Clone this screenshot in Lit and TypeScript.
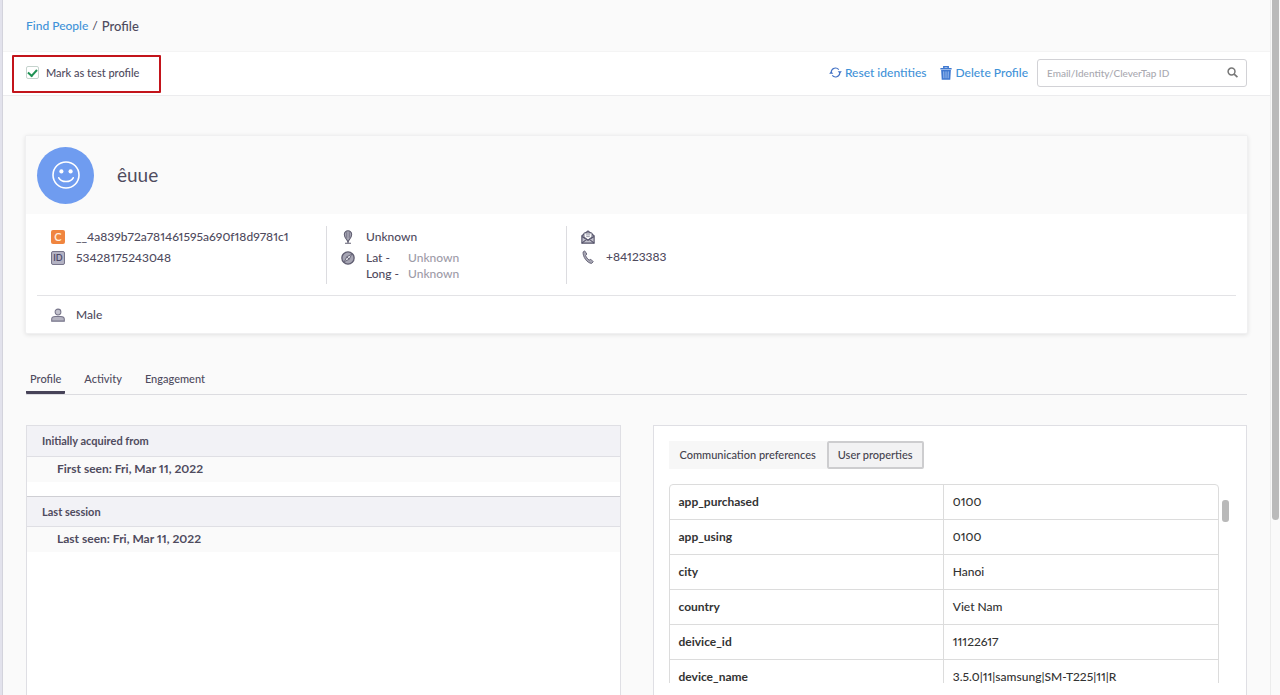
import { LitElement, html, css, svg } from "lit";
import { customElement, state } from "lit/decorators.js";

interface Property {
  name: string;
  value: string;
}

const PROPERTIES: Property[] = [
  { name: "app_purchased", value: "0100" },
  { name: "app_using", value: "0100" },
  { name: "city", value: "Hanoi" },
  { name: "country", value: "Viet Nam" },
  { name: "deivice_id", value: "11122617" },
  { name: "device_name", value: "3.5.0|11|samsung|SM-T225|11|R" },
];

const TABS = ["Profile", "Activity", "Engagement"];

const icon = (size: number, body: unknown, viewBox = "0 0 16 16") => html`<svg
  class="icon"
  width=${size}
  height=${size}
  viewBox=${viewBox}
  fill="none"
  aria-hidden="true"
>${body}</svg>`;

const resetIcon = icon(13, svg`
  <g stroke="#3f6fc4" stroke-width="1.4">
    <path d="M2.7 7.2A5.3 5.3 0 0 1 12 4.4"/>
    <path d="M13.3 8.8A5.3 5.3 0 0 1 4 11.6"/>
  </g>
  <path d="M10.8 6.4h5L13.3 9.6z" fill="#3f6fc4"/>
  <path d="M.2 9.6h5L2.7 6.4z" fill="#3f6fc4"/>`);

const trashIcon = icon(14, svg`
  <path d="M5.5 2.4V.8h5v1.6M1.6 3.2h12.8" stroke="#3f78d0" stroke-width="1.7"/>
  <path d="M2.4 4.6h11.2l-.7 11.2H3.1z" fill="#3f78d0"/>
  <path d="M5.4 6.2l.2 7.8M8 6.2V14M10.6 6.2l-.2 7.8" stroke="#a9c8f3" stroke-width="1"/>`);

const searchIcon = icon(11, svg`
  <circle cx="6.6" cy="6.6" r="5" stroke="#777" stroke-width="2.2"/>
  <path d="M10.4 10.4l4.8 4.4" stroke="#777" stroke-width="2.4"/>`);

const smileIcon = icon(28, svg`
  <circle cx="14" cy="14" r="13" stroke="#fff" stroke-width="1.6"/>
  <circle cx="9.4" cy="10.4" r="2.1" fill="#fff"/>
  <circle cx="18.6" cy="10.4" r="2.1" fill="#fff"/>
  <path d="M6.8 16.8a7.8 6 0 0 0 14.4 0" stroke="#fff" stroke-width="1.7" stroke-linecap="round"/>`,
  "0 0 28 28");

const pinIcon = icon(14, svg`
  <path d="M8 13.5C6.6 10.5 3.8 8.6 3.8 5A4.2 4.2 0 0 1 12.2 5C12.2 8.6 9.4 10.5 8 13.5z"
    fill="#a6a5b3" stroke="#5f5d70" stroke-width="1.2"/>
  <path d="M6.5 2.5v6.5M9.5 2.5v6.5" stroke="#6f6d80" stroke-width=".9"/>
  <path d="M8 12v3M4.6 15.2h6.8" stroke="#5f5d70" stroke-width="1.2"/>`);

const compassIcon = icon(14, svg`
  <circle cx="8" cy="8" r="7" fill="#a6a5b3" stroke="#5f5d70" stroke-width="1.5"/>
  <path d="M12.2 3.8L9.4 9.4 3.8 12.2 6.6 6.6z" fill="#dddde4" stroke="#5f5d70" stroke-width="1"/>
  <path d="M6.6 6.6L9.4 9.4" stroke="#5f5d70" stroke-width="1"/>`);

const mailIcon = icon(14, svg`
  <path d="M1 6.5L8 1l7 5.5V15H1z" fill="#c3c2cd" stroke="#55536a" stroke-width="1.3"/>
  <path d="M3.4 3.4h9.2V8L8 11.2 3.4 8z" fill="#fff" stroke="#55536a" stroke-width="1"/>
  <path d="M5.5 5.6h5M6 7.6h4" stroke="#77758a" stroke-width=".9"/>
  <path d="M1 7.5l7 4.5 7-4.5M1 15l5-4M15 15l-5-4" stroke="#55536a" stroke-width="1.2"/>`);

const phoneIcon = icon(14, svg`
  <path d="M4.2 1L6.7 4.6 5.3 6.2C5.9 8.2 7.4 10.2 9.3 11.5L11.2 10.6 14 13.4 12.2 15.3C7 15.2 1.8 7.6 2.4 2.2z"
    fill="#a6a5b3" stroke="#5f5d70" stroke-width="1" stroke-linejoin="round"/>`);

const personIcon = icon(14, svg`
  <circle cx="8" cy="4.6" r="3.3" fill="#c3c2cd" stroke="#77758a" stroke-width="1.2"/>
  <path d="M.8 15v-2.4C.8 10.6 3 9.7 5 9.7h6c2 0 4.2.9 4.2 2.9V15z"
    fill="#b5b4c1" stroke="#77758a" stroke-width="1.2"/>`);

@customElement("app-root")
export class AppRoot extends LitElement {
  @state() private tab = "Profile";
  @state() private view = "User properties";

  static styles = css`
    :host {
      display: flex;
      height: 100vh;
      overflow: hidden;
      background: #fafafa;
      color: #4f4b5e;
      font: 500 12px/16px Lato, "Liberation Sans", sans-serif;
      font-variant-numeric: lining-nums proportional-nums;
    }
    * { box-sizing: border-box; }
    button, input { font: inherit; color: inherit; }
    a { color: #3f92d8; text-decoration: none; }
    .icon { display: block; flex: none; }

    .edge { width: 3px; flex: none; background: #e2e2ec; border-right: 1px solid #d3d3dc; }
    .page {
      flex: 1;
      min-width: 0;
      display: flex;
      flex-direction: column;
      border-right: 1px solid #ececec;
    }
    .rail { width: 9px; flex: none; padding-left: 1px; }
    .rail-thumb { width: 7px; height: 520px; background: #bababa; border-radius: 0 0 4px 4px; }

    .crumbs {
      display: flex;
      align-items: center;
      gap: 4px;
      height: 51px;
      flex: none;
      padding: 0 23px;
    }
    .crumbs strong { font-size: 13px; font-weight: 500; }

    .toolbar {
      display: flex;
      align-items: center;
      gap: 12px;
      height: 45px;
      flex: none;
      padding: 0 23px 0 9px;
      background: #fff;
      border-top: 1px solid #f4f4f4;
      border-bottom: 1px solid #ececee;
    }
    .mark {
      display: flex;
      align-items: center;
      gap: 7px;
      height: 38px;
      padding: 0 20px 2px 12px;
      border: 2px solid #c3141b;
      border-radius: 1px;
      margin-right: auto;
      font-size: 11px;
    }
    .mark input {
      appearance: none;
      width: 13px;
      height: 13px;
      margin: 0;
      border: 1px solid #c5d3cd;
      border-radius: 2px;
      background: #fff;
      display: grid;
      place-items: center;
    }
    .mark input:checked::before {
      content: "";
      width: 7px;
      height: 4px;
      border: solid #1f9254;
      border-width: 0 0 2px 2px;
      transform: translateY(-1px) rotate(-48deg);
    }
    .action {
      display: flex;
      align-items: center;
      gap: 3px;
      padding: 0 0 2px;
      border: 0;
      background: none;
      color: #3f92d8;
    }
    .search {
      display: flex;
      align-items: center;
      width: 210px;
      height: 28px;
      margin: 0 0 2px -3px;
      padding: 0 8px 0 9px;
      border: 1px solid #d2d2d6;
      border-radius: 3px;
      background: #fff;
    }
    .search input {
      flex: 1;
      min-width: 0;
      padding: 0;
      border: 0;
      outline: 0;
      background: none;
      font-size: 10px;
    }
    .search input::placeholder { color: #a9a9b0; opacity: 1; }

    .content {
      flex: 1;
      min-height: 0;
      display: flex;
      flex-direction: column;
      padding: 39px 22px 0 22px;
    }
    .card {
      flex: none;
      background: #fff;
      border: 1px solid #f0f0f1;
      box-shadow: 0 1px 4px rgba(0, 0, 0, 0.1);
      border-radius: 2px;
    }
    .card-head {
      display: flex;
      align-items: center;
      gap: 23px;
      height: 78px;
      padding: 0 11px;
      background: #fafafa;
    }
    .avatar {
      width: 57px;
      height: 57px;
      border-radius: 50%;
      background: #6f9cf0;
      display: grid;
      place-items: center;
    }
    h1 { margin: 0; font-size: 19px; font-weight: 400; line-height: 24px; }
    .facts {
      display: flex;
      margin: 0 11px;
      padding: 12px 0 11px;
      border-bottom: 1px solid #e3e3e6;
    }
    .group {
      display: flex;
      flex-direction: column;
      gap: 5px;
      height: 58px;
      width: 240px;
      padding: 3px 0 0 14px;
      border-left: 1px solid #dcdce0;
    }
    .group.first { width: 289px; border-left: 0; }
    .group.contact { gap: 4px; }
    .fact { display: flex; gap: 11px; min-height: 16px; align-items: flex-start; }
    .fact .icon, .badge { margin-top: 1px; }
    .badge {
      width: 14px;
      height: 14px;
      border-radius: 2px;
      display: grid;
      place-items: center;
      flex: none;
      line-height: 12px;
    }
    .badge.c { background: #f0853f; color: #fff0e0; font-size: 11px; font-weight: 600; }
    .badge.id { background: #b3b2c3; color: #4a4766; border: 1px solid #77758a; font-size: 9px; font-weight: 600; }
    .coords { display: grid; grid-template-columns: 35px auto; column-gap: 7px; margin: 0; line-height: 16px; white-space: nowrap; }
    .coords dd { margin: 0; color: #9d9ba7; }
    .gender { display: flex; align-items: center; gap: 11px; height: 37px; padding: 0 25px; }

    .tabs { display: flex; gap: 15px; margin: 30px 1px 0; border-bottom: 1px solid #dcdce0; flex: none; }
    .tab {
      height: 30px;
      padding: 2px 4px 0;
      border: 0;
      border-bottom: 3px solid transparent;
      background: none;
      font-size: 11px;
    }
    .tab.on { border-color: #474358; border-radius: 1px; }

    .panels {
      flex: 1;
      min-height: 0;
      display: grid;
      grid-template-columns: 1fr 1fr;
      gap: 32px;
      margin: 30px 1px 0;
    }
    .panel { min-width: 0; background: #fff; border: 1px solid #dfdfe4; border-bottom: 0; }
    .panel h2 {
      margin: 0;
      height: 31px;
      padding: 0 15px;
      background: #f2f2f6;
      border-bottom: 1px solid #dfdfe4;
      font-size: 11px;
      line-height: 30px;
      font-weight: 700;
    }
    .panel p {
      margin: 0 0 14px;
      height: 25px;
      padding: 0 30px;
      background: #fafafa;
      line-height: 23px;
      font-weight: 700;
    }
    .panel h2.next { border-top: 1px solid #cfcfd4; }
    .right { padding: 15px 17px 0 15px; }
    .switch { display: flex; }
    .switch button {
      height: 28px;
      padding: 0 10px;
      border: 1px solid #f7f7f7;
      background: #f7f7f7;
      color: #45434e;
      font-size: 11px;
    }
    .switch button.on {
      border: 2px solid #cdcdcf;
      border-radius: 2px;
      background: #f2f2f3;
      padding: 0 9px;
    }
    .scroller { display: flex; align-items: flex-start; gap: 3px; height: 199px; margin-top: 15px; overflow: hidden; }
    table {
      flex: 1;
      width: 100%;
      border-collapse: separate;
      border-spacing: 0;
      table-layout: fixed;
      border: 1px solid #dcdcdc;
      border-radius: 4px;
      color: #333;
    }
    th, td {
      width: 50%;
      height: 35px;
      padding: 0 9px;
      text-align: left;
      border-bottom: 1px solid #dcdcdc;
    }
    th { font-weight: 700; border-right: 1px solid #dcdcdc; }
    .thumb { flex: none; width: 7px; height: 22px; margin-top: 16px; border-radius: 3px; background: #b9b9b9; }
  `;

  render() {
    return html`
      <div class="edge"></div>
      <main class="page">
        <nav class="crumbs" aria-label="Breadcrumb">
          <a href="#people">Find People</a><span>/</span><strong>Profile</strong>
        </nav>
        <div class="toolbar">
          <label class="mark"><input type="checkbox" checked />Mark as test profile</label>
          <button class="action">${resetIcon}Reset identities</button>
          <button class="action">${trashIcon}Delete Profile</button>
          <label class="search">
            <input type="text" aria-label="Search profiles" placeholder="Email/Identity/CleverTap ID" />
            ${searchIcon}
          </label>
        </div>
        <div class="content">
          <section class="card">
            <header class="card-head">
              <div class="avatar">${smileIcon}</div>
              <h1>êuue</h1>
            </header>
            <div class="facts">
              <div class="group first">
                <div class="fact"><span class="badge c">C</span>__4a839b72a781461595a690f18d9781c1</div>
                <div class="fact"><span class="badge id">ID</span>53428175243048</div>
              </div>
              <div class="group">
                <div class="fact">${pinIcon}Unknown</div>
                <div class="fact">
                  ${compassIcon}
                  <dl class="coords">
                    <dt>Lat -</dt><dd>Unknown</dd>
                    <dt>Long -</dt><dd>Unknown</dd>
                  </dl>
                </div>
              </div>
              <div class="group contact">
                <div class="fact">${mailIcon}</div>
                <div class="fact">${phoneIcon}+84123383</div>
              </div>
            </div>
            <div class="gender">${personIcon}Male</div>
          </section>

          <nav class="tabs">
            ${TABS.map((t) => html`<button
              class="tab ${t === this.tab ? "on" : ""}"
              @click=${() => (this.tab = t)}
            >${t}</button>`)}
          </nav>

          <div class="panels">
            <section class="panel">
              <h2>Initially acquired from</h2>
              <p>First seen: Fri, Mar 11, 2022</p>
              <h2 class="next">Last session</h2>
              <p>Last seen: Fri, Mar 11, 2022</p>
            </section>
            <section class="panel right">
              <div class="switch">
                ${["Communication preferences", "User properties"].map((v) => html`<button
                  class=${v === this.view ? "on" : ""}
                  @click=${() => (this.view = v)}
                >${v}</button>`)}
              </div>
              <div class="scroller">
                <table>
                  <tbody>
                    ${PROPERTIES.map((p) => html`<tr><th scope="row">${p.name}</th><td>${p.value}</td></tr>`)}
                  </tbody>
                </table>
                <div class="thumb"></div>
              </div>
            </section>
          </div>
        </div>
      </main>
      <div class="rail"><div class="rail-thumb"></div></div>
    `;
  }
}
